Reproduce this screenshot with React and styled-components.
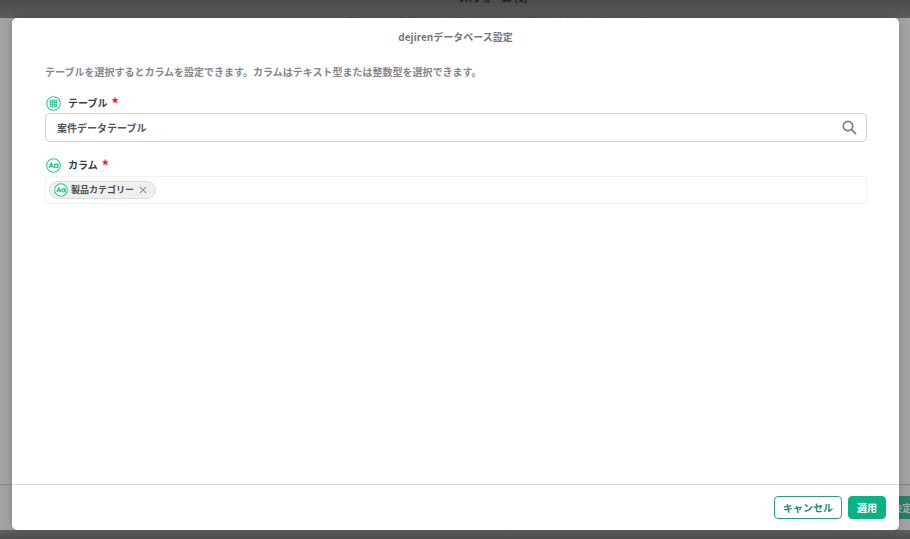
import React, { useState } from "react";
import styled, { createGlobalStyle } from "styled-components";

const GlobalStyle = createGlobalStyle`
  * {
    box-sizing: border-box;
  }
  body {
    margin: 0;
    background: #4a4a4a;
  }
  body,
  button,
  input {
    font-family: "Noto Sans CJK JP", sans-serif;
    font-size: 10px;
    line-height: 16px;
    font-weight: 700;
  }
`;

const Page = styled.div`
  position: relative;
  display: flex;
  flex-direction: column;
  height: 100vh;
  overflow: hidden;
  background: linear-gradient(
    #4a4a4a,
    #5c5c5c 18px,
    #626262 calc(100% - 9px),
    #4c4c4c
  );
`;

const Behind = styled.header`
  height: 18px;
  flex: none;
  overflow: hidden;
  text-align: center;
`;

const BehindTitle = styled.h1`
  margin: -10px 0 0;
  padding-left: 76px;
  font-size: 10px;
  font-weight: 700;
  line-height: 16px;
  color: #1c1c1c;
`;

const BehindText = styled.p`
  margin: 7px 0 0;
  padding-left: 92px;
  font-weight: 400;
  color: #4b4b4b;
`;

const Sheet = styled.section`
  flex: 1;
  margin-bottom: 9px;
  display: flex;
  flex-direction: column;
  justify-content: flex-end;
  background: #a3a3a3;
`;

const SheetFooter = styled.footer`
  display: flex;
  justify-content: flex-end;
  height: 46px;
  padding-top: 11px;
  border-top: 1px solid #858585;
`;

const SheetButton = styled.button`
  height: 23px;
  margin-right: -12px;
  padding: 0 10px;
  border: 0;
  background: #2a8067;
  color: #aaa;
`;

const Overlay = styled.div`
  position: absolute;
  inset: 0;
  padding: 18px 11px 9px 12px;
  display: flex;
`;

const Dialog = styled.div`
  flex: 1;
  display: flex;
  flex-direction: column;
  border-radius: 5px;
  background: #fff;
  box-shadow: 0 0 10px rgba(0, 0, 0, 0.2);
`;

const DialogTitle = styled.h2`
  margin: 11px 0 0;
  font-size: 10px;
  line-height: 16px;
  text-align: center;
  color: #777;
`;

const DialogBody = styled.div`
  flex: 1;
  padding: 19px 32px 0 33px;
`;

const Description = styled.p`
  margin: 0 0 15px;
  color: #85878d;
`;

const Field = styled.div`
  margin-bottom: 15px;
`;

const Label = styled.label`
  display: flex;
  align-items: center;
  height: 16px;
  margin-bottom: ${(props) => props.$gap || "2px"};
  color: #343b50;
  svg {
    margin: 0 7px 0 1px;
  }
`;

const Required = styled.span`
  margin-left: 4px;
  color: #f11;
  font-size: 14px;
`;

const SearchBox = styled.div`
  display: flex;
  align-items: center;
  height: 29px;
  padding: 0 9px 0 11px;
  border: 1px solid #d2d2d4;
  border-radius: 4px;
`;

const SearchInput = styled.input`
  flex: 1;
  min-width: 0;
  padding: 0;
  border: 0;
  outline: 0;
  background: transparent;
  color: #50545f;
`;

const IconButton = styled.button`
  display: flex;
  padding: 0;
  border: 0;
  background: none;
  color: ${(props) => props.$color || "#808087"};
  cursor: pointer;
`;

const ChipBox = styled.div`
  display: flex;
  align-items: center;
  height: 28px;
  padding: 0 3px;
  border: 1px solid #f3f3f3;
  border-radius: 3px;
`;

const Chip = styled.span`
  display: flex;
  align-items: center;
  gap: 3px;
  height: 18px;
  padding: 0 8px 0 4px;
  border: 1px solid #dcdfd9;
  border-radius: 9px;
  background: #eef0eb;
  color: #494c50;
  font-size: 9px;
  button {
    margin-left: 2px;
  }
`;

const DialogFooter = styled.footer`
  display: flex;
  justify-content: flex-end;
  gap: 6px;
  height: 46px;
  padding: 11px 13px 0;
  border-top: 1px solid #dedede;
`;

const Button = styled.button`
  height: 23px;
  padding: 0 8px;
  border: 1px solid ${(props) => (props.$primary ? "#08b484" : "#2a9f7c")};
  border-radius: 4px;
  background: ${(props) => (props.$primary ? "#08b484" : "#fff")};
  color: ${(props) => (props.$primary ? "#fff" : "#188c69")};
  cursor: pointer;
`;

const TableIcon = () => (
  <svg width="15" height="15" viewBox="0 0 15 15" fill="none" stroke="#2fc596">
    <circle cx="7.5" cy="7.5" r="6.8" strokeWidth="1.1" />
    <rect x="4.2" y="4.2" width="6.6" height="6.6" fill="#b8ecda" strokeWidth="1" />
    <path d="M6.4 4v7M8.6 4v7M4 6.4h7M4 8.6h7" strokeWidth="0.8" />
  </svg>
);

const TextIcon = ({ size = 15 }) => (
  <svg
    width={size}
    height={size}
    viewBox="0 0 15 15"
    fill="none"
    stroke="#2fc596"
    strokeWidth="1.1"
  >
    <circle cx="7.5" cy="7.5" r="6.8" fill="#fff" />
    <path d="M3 9.8L5.2 5.2L7.4 9.8M3.8 8.4h2.8" strokeWidth="1.4" />
    <rect x="8.5" y="6.2" width="3.2" height="3.3" rx="0.9" strokeWidth="1.4" />
    <path d="M11.8 5.6v4.5" strokeWidth="1.3" />
  </svg>
);

const SearchIcon = () => (
  <svg width="15" height="15" viewBox="0 0 15 15" fill="none" stroke="currentColor">
    <circle cx="6" cy="6" r="4.7" strokeWidth="1.7" />
    <path d="M9.4 9.4L14 14" strokeWidth="1.8" />
  </svg>
);

const CloseIcon = () => (
  <svg width="8" height="8" viewBox="0 0 8 8" fill="none" stroke="currentColor">
    <path d="M0.8 0.8l6.4 6.4M7.2 0.8L0.8 7.2" strokeWidth="1.2" />
  </svg>
);

const App = () => {
  const [table, setTable] = useState("案件データテーブル");
  const [columns, setColumns] = useState(["製品カテゴリー"]);

  const removeColumn = (name) =>
    setColumns(columns.filter((column) => column !== name));

  return (
    <>
      <GlobalStyle />
      <Page>
        <Behind>
          <BehindTitle>VHフォーム (1)</BehindTitle>
          <BehindText>
            フォームからデータベースに登録されたデータを送信して、ユーザー
          </BehindText>
        </Behind>
        <Sheet>
          <SheetFooter>
            <SheetButton type="button">決定</SheetButton>
          </SheetFooter>
        </Sheet>
        <Overlay>
          <Dialog role="dialog" aria-labelledby="dialog-title">
            <DialogTitle id="dialog-title">dejirenデータベース設定</DialogTitle>
            <DialogBody>
              <Description>
                テーブルを選択するとカラムを設定できます。カラムはテキスト型または整数型を選択できます。
              </Description>
              <Field>
                <Label htmlFor="table">
                  <TableIcon />
                  テーブル<Required>*</Required>
                </Label>
                <SearchBox>
                  <SearchInput
                    id="table"
                    value={table}
                    onChange={(e) => setTable(e.target.value)}
                  />
                  <IconButton type="button" aria-label="検索">
                    <SearchIcon />
                  </IconButton>
                </SearchBox>
              </Field>
              <Field>
                <Label as="div" id="columns" $gap="3px">
                  <TextIcon />
                  カラム<Required>*</Required>
                </Label>
                <ChipBox role="group" aria-labelledby="columns">
                  {columns.map((column) => (
                    <Chip key={column}>
                      <TextIcon size={14} />
                      {column}
                      <IconButton
                        type="button"
                        aria-label="削除"
                        $color="#969996"
                        onClick={() => removeColumn(column)}
                      >
                        <CloseIcon />
                      </IconButton>
                    </Chip>
                  ))}
                </ChipBox>
              </Field>
            </DialogBody>
            <DialogFooter>
              <Button type="button">キャンセル</Button>
              <Button type="button" $primary>
                適用
              </Button>
            </DialogFooter>
          </Dialog>
        </Overlay>
      </Page>
    </>
  );
};

export default App;
